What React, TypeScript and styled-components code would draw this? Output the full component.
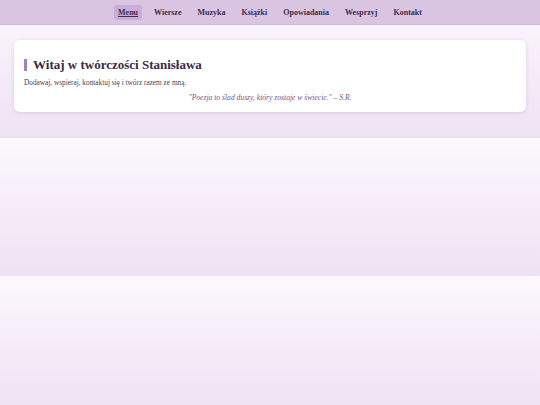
import React from "react";
import styled, { createGlobalStyle } from "styled-components";

const Global = createGlobalStyle`
  html {
    background: linear-gradient(180deg, #fcf9fd 0%, #f5ecf8 50%, #eee2f4 100%);
    background-size: 100% 138px;
    background-repeat: repeat-y;
    min-height: 100%;
  }
  body {
    margin: 0;
    font-family: Georgia, "Liberation Serif", serif;
    color: #3b2c45;
  }
`;

const NavBar = styled.nav`
  height: 25px;
  box-sizing: border-box;
  background: #d9c5e2;
  border-bottom: 1px solid #cdb6d8;
  display: flex;
  justify-content: center;
  align-items: center;
  gap: 8px;
`;

const NavItem = styled.a<{ $active?: boolean }>`
  font-size: 8px;
  font-weight: bold;
  color: #3e2b48;
  text-decoration: ${(p) => (p.$active ? "underline" : "none")};
  padding: 3px 4px;
  border-radius: 3px;
  background: ${(p) => (p.$active ? "#c8aed8" : "transparent")};
`;

const Main = styled.main`
  padding: 15px 14px 28px;
`;

const Card = styled.section`
  background: #ffffff;
  border-radius: 6px;
  box-shadow: 0 1px 4px rgba(120, 80, 140, 0.18);
  padding: 19px 10px 9px;
`;

const Title = styled.h1`
  margin: 0 0 8px;
  font-size: 13px;
  font-weight: bold;
  color: #3a2945;
  border-left: 3px solid #a67fbd;
  padding-left: 6px;
  line-height: 12px;
`;

const Text = styled.p`
  margin: 0 0 7px;
  font-size: 7.3px;
  line-height: 8.4px;
  color: #4a3f52;
`;

const Quote = styled.p`
  margin: 0;
  font-size: 7.6px;
  line-height: 8.6px;
  font-style: italic;
  color: #7a5590;
  text-align: center;
`;

const items = ["Menu", "Wiersze", "Muzyka", "Książki", "Opowiadania", "Wesprzyj", "Kontakt"];

export default function App() {
  return (
    <>
      <Global />
      <NavBar>
        {items.map((it, i) => (
          <NavItem key={it} href="#" $active={i === 0}>
            {it}
          </NavItem>
        ))}
      </NavBar>
      <Main>
        <Card>
          <Title>Witaj w twórczości Stanisława</Title>
          <Text>Dodawaj, wspieraj, kontaktuj się i twórz razem ze mną.</Text>
          <Quote>"Poezja to ślad duszy, który zostaje w świecie." – S.R.</Quote>
        </Card>
      </Main>
    </>
  );
}
